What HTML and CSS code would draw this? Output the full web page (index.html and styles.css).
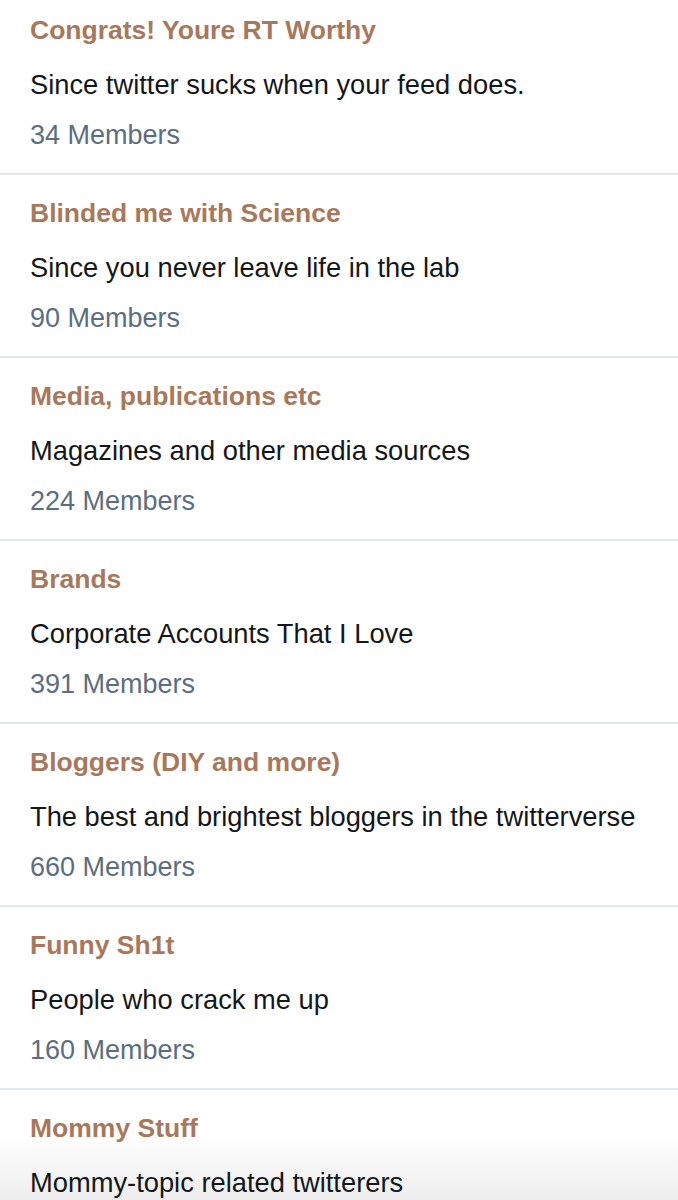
FILE: index.html
```html
<!DOCTYPE html>
<html>
<head>
<meta charset="utf-8">
<link rel="stylesheet" href="styles.css">
</head>
<body>
<ul class="lists">
  <li class="item">
    <div class="title">Congrats! Youre RT Worthy</div>
    <div class="desc">Since twitter sucks when your feed does.</div>
    <div class="members">34 Members</div>
  </li>
  <li class="item">
    <div class="title">Blinded me with Science</div>
    <div class="desc">Since you never leave life in the lab</div>
    <div class="members">90 Members</div>
  </li>
  <li class="item">
    <div class="title">Media, publications etc</div>
    <div class="desc">Magazines and other media sources</div>
    <div class="members">224 Members</div>
  </li>
  <li class="item">
    <div class="title">Brands</div>
    <div class="desc">Corporate Accounts That I Love</div>
    <div class="members">391 Members</div>
  </li>
  <li class="item">
    <div class="title">Bloggers (DIY and more)</div>
    <div class="desc">The best and brightest bloggers in the twitterverse</div>
    <div class="members">660 Members</div>
  </li>
  <li class="item">
    <div class="title">Funny Sh1t</div>
    <div class="desc">People who crack me up</div>
    <div class="members">160 Members</div>
  </li>
  <li class="item">
    <div class="title">Mommy Stuff</div>
    <div class="desc">Mommy-topic related twitterers</div>
  </li>
</ul>
</body>
</html>
```

FILE: styles.css
```css
html {
  margin: 0;
  padding: 0;
  background: linear-gradient(to bottom, #ffffff 0, #ffffff 1135px, #ededed 1200px) no-repeat;
  background-size: 100% 1200px;
  height: 1200px;
  overflow: hidden;
}
body {
  margin: 0;
  padding: 0;
  font-family: "Liberation Sans", Arial, sans-serif;
}
.lists {
  list-style: none;
  margin: 0;
  padding: 0;
}
.item {
  padding: 23px 30px 23px 30px;
  border-bottom: 2px solid #e1e8ed;
}
.item:first-child {
  padding-top: 15px;
}
.item:last-child {
  border-bottom: none;
  padding-bottom: 0;
}
.title {
  font-size: 26.5px;
  line-height: 30px;
  font-weight: bold;
  color: #a8785c;
  margin-bottom: 25px;
}
.desc {
  font-size: 27.3px;
  line-height: 30px;
  color: #14171a;
  margin-bottom: 20px;
}
.item:last-child .desc {
  margin-bottom: 0;
}
.members {
  font-size: 27px;
  line-height: 30px;
  color: #5b6e80;
}
```
